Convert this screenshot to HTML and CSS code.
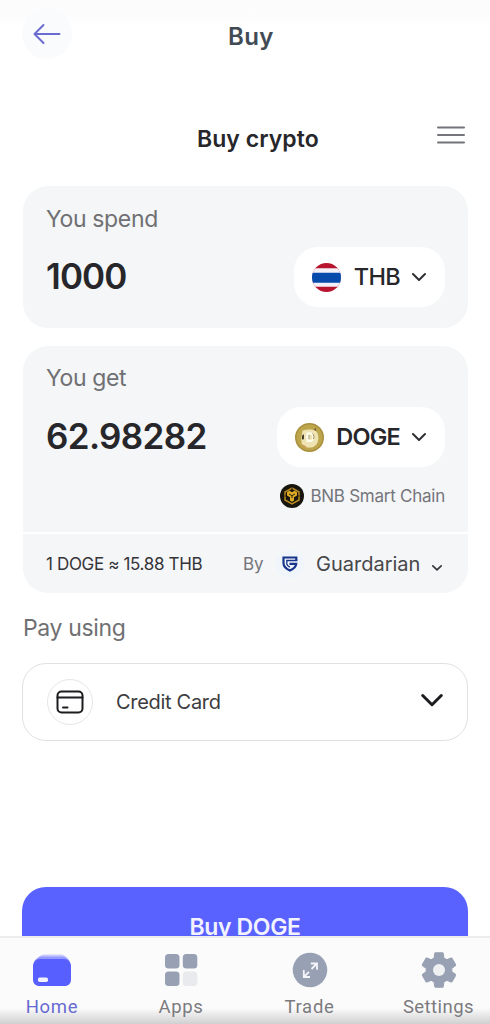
FILE: index.html
```html
<!DOCTYPE html>
<html lang="en">
<head>
<meta charset="utf-8">
<title>Buy crypto</title>
<link rel="stylesheet" href="styles.css">
</head>
<body>
<div class="app">
  <header class="topbar">
    <div class="back">
      <svg width="28" height="22" viewBox="0 0 28 22" fill="none" stroke="#6b6cd0" stroke-width="2" stroke-linecap="round" stroke-linejoin="round"><path d="M26.500 11H1.500M10.500 2L1.500 11l9 9"/></svg>
    </div>
    <h1 class="page-title">Buy</h1>
  </header>

  <div class="widget-head">
    <h2 class="widget-title">Buy crypto</h2>
    <svg class="menu" width="28" height="18" viewBox="0 0 28 18" fill="none" stroke="#73747c" stroke-width="2" stroke-linecap="round"><path d="M1 1.500h26M1 9h26M1 16.500h26"/></svg>
  </div>

  <section class="card spend">
    <div class="label label-spend">You spend</div>
    <div class="row">
      <div class="amount amount-spend">1000</div>
      <div class="pill">
        <svg width="29" height="29" viewBox="0 0 29 29"><defs><clipPath id="flag"><circle cx="14.500" cy="14.500" r="14.500"/></clipPath></defs><g clip-path="url(#flag)"><path fill="#b9142f" d="M0 0h29v29H0z"/><path fill="#f3f0f8" d="M0 5.300h29v18.400H0z"/><path fill="#064bac" d="M0 9.700h29v10H0z"/></g></svg>
        <span class="code">THB</span>
        <svg width="16" height="10" viewBox="0 0 16 10" fill="none" stroke="#303034" stroke-width="2" stroke-linecap="round" stroke-linejoin="round"><path d="M2 2l6 6 6-6"/></svg>
      </div>
    </div>
  </section>

  <section class="card get">
    <div class="get-main">
      <div class="label">You get</div>
      <div class="row row-get">
        <div class="amount amount-get">62.98282</div>
        <div class="pill">
          <svg width="29" height="29" viewBox="0 0 29 29" fill="none"><circle cx="14.500" cy="14.500" r="14.500" fill="#a98f3d"/><circle cx="14.500" cy="14.500" r="13" fill="#bca54b"/><path d="M7.500 7.500c4-1.200 8-1.200 11-.5l2.500-2.200.6 4c1.900 2.700 2.300 6.600 1.200 10-1.200 3.700-4.600 6-8.200 5.800-3.400 0-6.300-1.600-8-4.200l-.4-5z" fill="#efe3b3"/><path d="M18.500 6.700L21 4.500l.6 3.900z" fill="#80642d"/><path d="M7.500 21.500l3.600 1.800-.5 2-2.500-1.600z" fill="#cf9a5b"/><path d="M8.300 11.300c-1.600 1.200-1.900 4-.6 5.700l1.200-1.200v-4z" fill="#39301e"/><path d="M12.500 10.500h2.300c4.800 0 4.800 7.500 0 7.500h-2.300zM10.800 14.200h4" stroke="#fffdf0" stroke-width="2"/><path d="M14 12v4" stroke="#b5aa7d" stroke-width="1.300"/><path d="M17.500 10.500c1.600 1.200 2 4 .8 5.700" stroke="#9b8950" stroke-width="1"/></svg>
          <span class="code code-doge">DOGE</span>
          <svg width="16" height="10" viewBox="0 0 16 10" fill="none" stroke="#303034" stroke-width="2" stroke-linecap="round" stroke-linejoin="round"><path d="M2 2l6 6 6-6"/></svg>
        </div>
      </div>
      <div class="network">
        <svg width="24" height="24" viewBox="0 0 24 24" fill="none"><circle cx="12" cy="12" r="12" fill="#18160f"/><path d="M12 4l7 4v8l-7 4-7-4V8z" stroke="#b98b1e" stroke-width="1.500"/><path d="M7 8.200l2.400-1.400L12 8.300l2.600-1.500L17 8.200v3.200l-3 1.800v3.300l-2 1.300-2-1.300v-3.300l-3-1.800z" fill="#e0ad27"/><path d="M9 9.900l3 1.800 3-1.800M12 11.700v2.500M12 3v2.500M4.500 12h2M17.500 12h2" stroke="#2b220f" stroke-width="1"/></svg>
        <span class="network-name">BNB Smart Chain</span>
      </div>
    </div>
    <div class="rate">
      <span class="rate-text">1 DOGE ≈ 15.88 THB</span>
      <span class="by">By</span>
      <span class="provider-logo">
        <svg width="16" height="16" viewBox="0 0 16 16" fill="none" stroke="#18358c"><path d="M14.300 4.200V1.500H1.500v5.500c0 3.700 3 6 6.400 7.500 3.500-1.500 6-3.700 6.300-6.700H7.500" stroke-width="2.200"/><path d="M15.400 4.500H4.800v3c0 1.800 1.500 2.900 3.100 3.700" stroke-width="1.300"/></svg>
      </span>
      <span class="provider">Guardarian</span>
      <svg class="provider-chev" width="12" height="8" viewBox="0 0 12 8" fill="none" stroke="#39393d" stroke-width="1.700" stroke-linecap="round" stroke-linejoin="round"><path d="M1.800 1.800L6 5.800l4.200-4"/></svg>
    </div>
  </section>

  <div class="pay-label">Pay using</div>
  <div class="method">
    <span class="method-icon">
      <svg width="28" height="24" viewBox="0 0 28 24" fill="none" stroke="#1d1d20" stroke-width="2" stroke-linecap="round"><rect x="1.500" y="1.500" width="25" height="21" rx="4"/><path d="M1.500 7.500h25M7 17.500h4.500"/></svg>
    </span>
    <span class="method-name">Credit Card</span>
    <svg class="method-chev" width="24" height="15" viewBox="0 0 24 15" fill="none" stroke="#1d1d20" stroke-width="3" stroke-linecap="round" stroke-linejoin="round"><path d="M2.700 2.500l9.300 9.200 9.300-9.200"/></svg>
  </div>

  <div class="cta-window"><div class="cta"><span class="cta-text">Buy DOGE</span></div></div>

  <nav class="tabs">
    <div class="tab active">
      <svg width="38" height="34" viewBox="0 0 38 34"><path d="M11 1.500h17c3 0 6 3 8 5H3c2-2 5-5 8-5z" fill="#c9cbff"/><path d="M9 3.500h20c3 0 6 2 8 5H1c2-3 5-5 8-5z" fill="#9498ff"/><path d="M7 6h24c4 0 7 3 7 7v13.500c0 4-2.500 6.500-6.500 6.500h-25C2.500 33 0 30.500 0 26.500V13c0-4 3-7 7-7z" fill="#585fff"/><rect x="5" y="24.500" width="10" height="4.500" rx="1.800" fill="#f3f3ff"/></svg>
      <span class="tab-name">Home</span>
    </div>
    <div class="tab">
      <svg width="34" height="34" viewBox="0 0 34 34" fill="#98a1b3"><rect x="1" y="1" width="14.500" height="14.500" rx="3.500"/><rect x="18.800" y="1" width="14.500" height="14.500" rx="3.500"/><rect x="1" y="18.500" width="14.500" height="14.500" rx="3.500"/><rect x="18.800" y="18.500" width="14.500" height="14.500" rx="3.500" fill="#e9eaed"/></svg>
      <span class="tab-name">Apps</span>
    </div>
    <div class="tab">
      <svg width="36" height="36" viewBox="0 0 36 36" fill="none" stroke="#f3f5f8" stroke-width="1.800"><circle cx="18" cy="18" r="17.300" fill="#98a1b3" stroke="none"/><path d="M18.800 11.500h6.200v6.200M25 11.500l-5.500 5.500M11.800 18v7H18M11.800 25l5.200-5.200"/></svg>
      <span class="tab-name">Trade</span>
    </div>
    <div class="tab tab-settings">
      <svg width="36" height="36" viewBox="1.500 1.500 21 21" fill="#98a1b3"><path d="M19.430 12.980c.04-.32.070-.64.070-.98s-.03-.66-.07-.98l2.110-1.650c.19-.15.240-.42.120-.64l-2-3.460c-.12-.22-.39-.3-.61-.22l-2.490 1c-.52-.4-1.080-.73-1.690-.98l-.38-2.650C14.460 2.180 14.250 2 14 2h-4c-.25 0-.46.18-.49.42l-.38 2.650c-.61.25-1.170.59-1.690.98l-2.490-1c-.23-.09-.49 0-.61.22l-2 3.460c-.13.22-.07.49.12.64l2.110 1.650c-.04.32-.07.65-.07.98s.03.66.07.98l-2.110 1.650c-.19.15-.24.42-.12.64l2 3.460c.12.22.39.3.61.22l2.490-1c.52.4 1.080.73 1.690.98l.38 2.650c.03.24.24.42.49.42h4c.25 0 .46-.18.49-.42l.38-2.650c.61-.25 1.170-.59 1.690-.98l2.490 1c.23.09.49 0 .61-.22l2-3.460c.12-.22.07-.49-.12-.64z" stroke="#98a1b3" stroke-width=".6" stroke-linejoin="round"/><circle cx="12" cy="12" r="3.500" fill="#eef0f2"/></svg>
      <span class="tab-name">Settings</span>
    </div>
  </nav>
</div>
</body>
</html>
```
FILE: styles.css
```css
* { box-sizing: border-box; }
body { margin: 0; background: #fff; font-family: Inter, "Liberation Sans", sans-serif; color: #27272b; }
svg { display: block; flex: none; }
.app { width: 490px; height: 1024px; overflow: hidden; display: flex; flex-direction: column; background: linear-gradient(#fcfcfc 0, #fcfcfc 14px, #fff 26px); white-space: nowrap; }
.topbar { height: 104px; flex: none; padding: 9px 0 0 22px; display: flex; align-items: flex-start; }
.back { width: 50px; height: 50px; border-radius: 50%; background: #f9fbfc; display: flex; align-items: center; justify-content: center; }
.page-title { margin: 13px 0 0 156px; font-size: 24px; line-height: 30px; font-weight: 600; color: #424b55; letter-spacing: .4px; }
.widget-head { height: 82px; flex: none; display: flex; align-items: flex-start; justify-content: space-between; padding: 20px 25px 0 197px; }
.widget-title { margin: 0; font-size: 23px; line-height: 30px; font-weight: 600; letter-spacing: .05px; }
.menu { margin-top: 2px; }
.card { margin: 0 22px 0 23px; flex: none; background: #f4f6f8; border-radius: 25px; }
.spend { height: 142px; padding: 18px 23px 0; }
.label, .pay-label { font-size: 23px; line-height: 30px; color: #707073; letter-spacing: -.35px; }
.row { display: flex; align-items: center; justify-content: space-between; height: 60px; margin-top: 13px; }
.row-get { margin-top: 14px; }
.amount { font-size: 35px; line-height: 42px; font-weight: 600; letter-spacing: -.65px; margin-bottom: 2px; }
.amount-spend { letter-spacing: -.9px; }
.pill { height: 60px; border-radius: 24px; background: #fff; display: flex; align-items: center; padding: 0 18px; }
.code { font-size: 23.500px; line-height: 30px; font-weight: 500; letter-spacing: -.7px; margin: 0 11px 0 13px; }
.code-doge { font-weight: 600; letter-spacing: -.8px; margin-left: 12px; }
.get { height: 247px; margin-top: 18px; }
.get-main { height: 188px; padding: 17px 23px 0; border-bottom: 2px solid #fff; }
.network { display: flex; align-items: center; justify-content: flex-end; gap: 6px; height: 24px; margin-top: 17px; }
.network-name { font-size: 17px; line-height: 22px; color: #75757b; letter-spacing: -.25px; }
.rate { height: 59px; display: flex; align-items: center; padding: 1px 25px 0 23px; }
.rate-text { font-size: 17px; line-height: 24px; color: #343438; width: 197px; letter-spacing: -.35px; }
.by { font-size: 17px; line-height: 24px; color: #75757b; width: 33px; }
.provider-logo { width: 28px; height: 28px; border-radius: 50%; background: #f0f5fc; display: flex; align-items: center; justify-content: center; }
.provider { font-size: 20px; line-height: 26px; color: #47474b; margin-left: 12px; }
.provider-chev { margin: 7px 0 0 auto; }
.pay-label { flex: none; margin: 20px 0 0 23px; }
.method { flex: none; height: 78px; margin: 20px 22px 0; padding: 0 23px 1px 24px; border: 1.500px solid #e3dfe4; border-radius: 24px; display: flex; align-items: center; }
.method-icon { width: 46px; height: 46px; border: 1.500px solid #e6e6e9; border-radius: 50%; display: flex; align-items: center; justify-content: center; }
.method-name { font-size: 20px; line-height: 26px; color: #3c3c40; letter-spacing: -.3px; margin: 0 auto 0 23px; }
.method-chev { margin-bottom: 3px; }
.cta-window { flex: none; height: 49px; margin: 146px 22px 0; overflow: hidden; }
.cta { height: 78px; border-radius: 24px; background: #5961ff; display: flex; align-items: center; justify-content: center; padding-top: 2px; }
.cta-text { font-size: 23px; line-height: 30px; font-weight: 600; letter-spacing: -.35px; color: #f3f3ff; }
.tabs { flex: 1; display: grid; grid-template-columns: 104px 154px 103px 129px; align-items: start; font-family: Roboto, "Liberation Sans", sans-serif; background: linear-gradient(#fbfbfc 0, #fbfbfc 70px, #d0d0d1 100%); border-top: 2px solid #ededf0; }
.tab { display: flex; flex-direction: column; align-items: center; padding-top: 14px; }
.tab-settings { padding-left: 26px; }
.tab svg { height: 36px; }
.tab-name { font-size: 18.500px; line-height: 22px; margin-top: 8px; letter-spacing: .7px; color: #7b7b7e; }
.tab-settings .tab-name { letter-spacing: .45px; }
.active .tab-name { color: #686bd0; }
```
